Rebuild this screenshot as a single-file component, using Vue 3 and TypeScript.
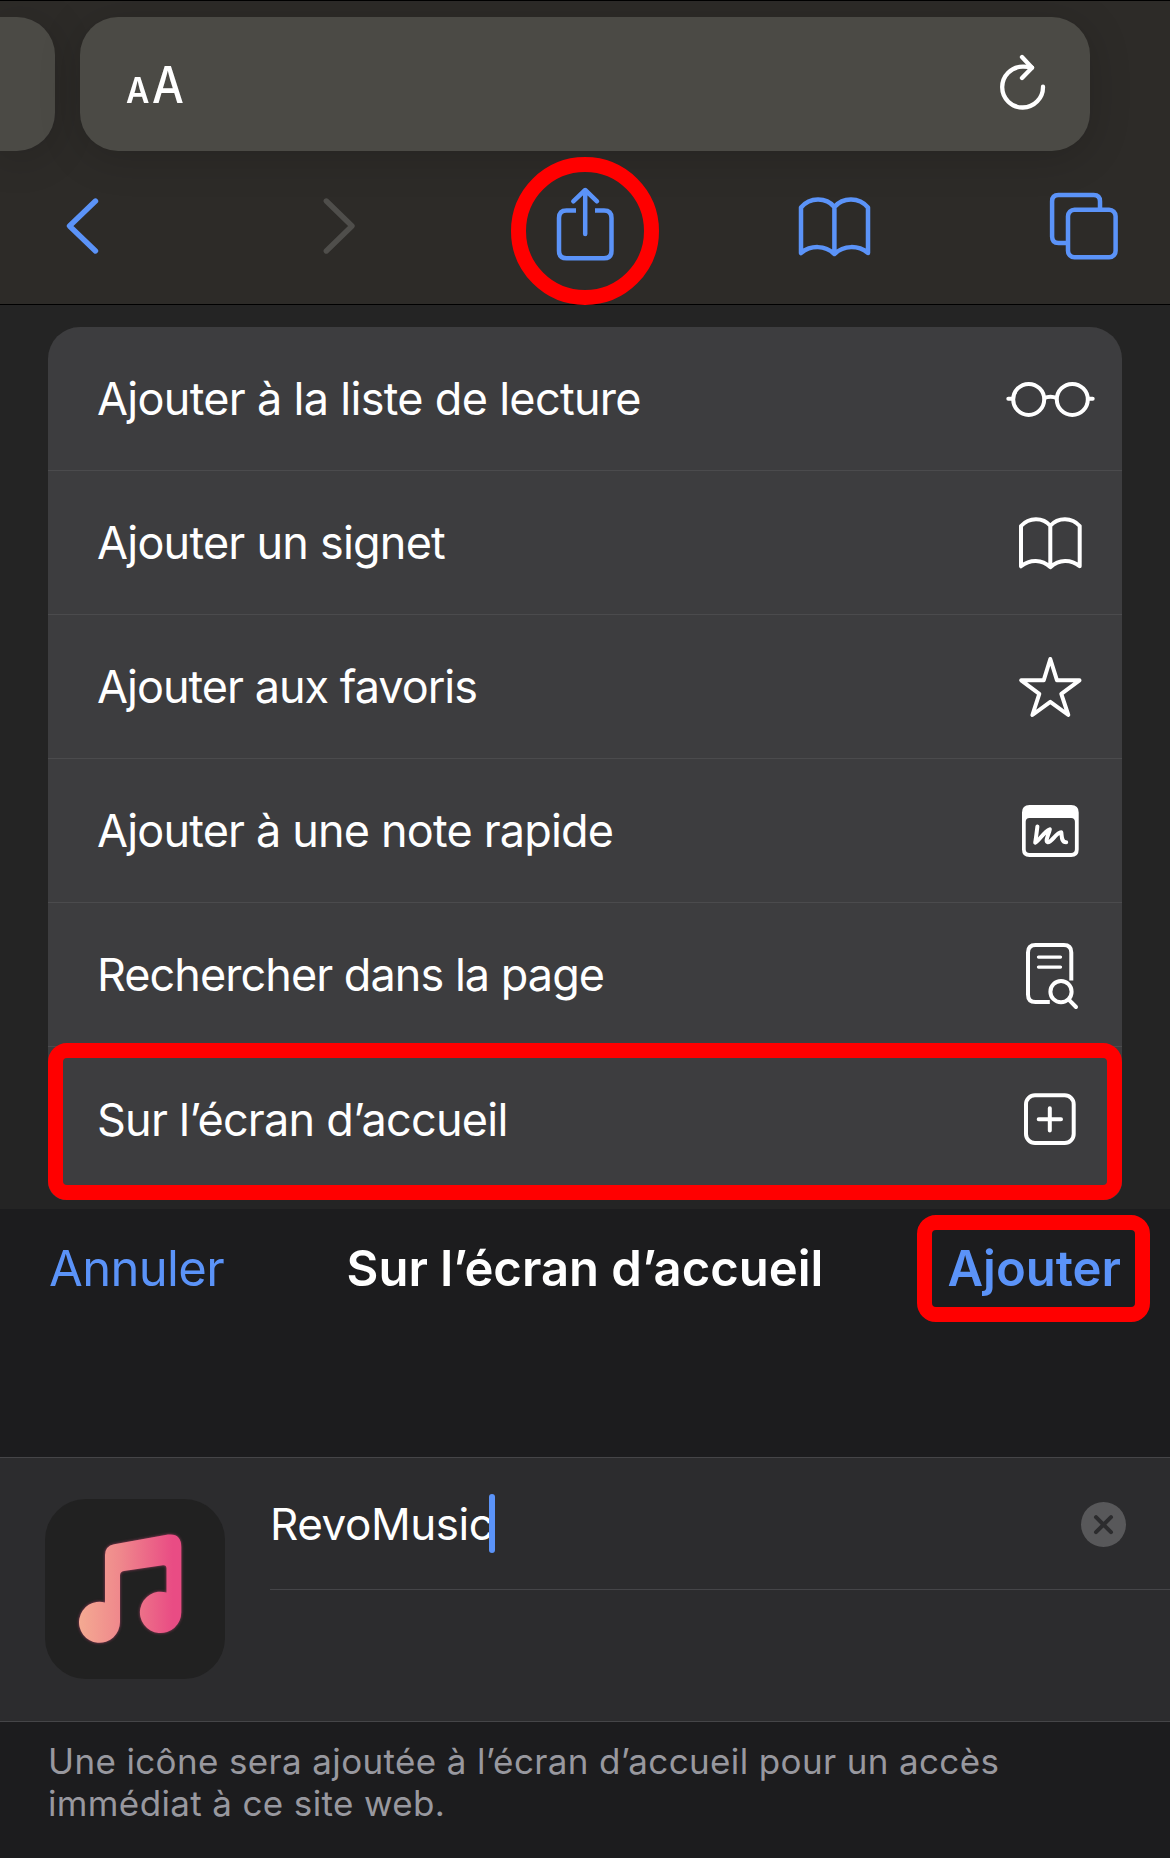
<script setup lang="ts">
import { ref } from 'vue'

type IconName = 'glasses' | 'book' | 'star' | 'note' | 'find' | 'plus'

interface Action {
  label: string
  icon: IconName
  tracking: number
}

const actions: Action[] = [
  { label: 'Ajouter à la liste de lecture', icon: 'glasses', tracking: -0.7 },
  { label: 'Ajouter un signet', icon: 'book', tracking: -0.78 },
  { label: 'Ajouter aux favoris', icon: 'star', tracking: -1 },
  { label: 'Ajouter à une note rapide', icon: 'note', tracking: -0.83 },
  { label: 'Rechercher dans la page', icon: 'find', tracking: -0.96 },
  { label: 'Sur l’écran d’accueil', icon: 'plus', tracking: -0.75 },
]

const siteName = ref<string>('RevoMusic')
</script>

<template>
  <main class="screen">
    <section class="browser">
      <div class="tabs">
        <div class="pill previous"></div>
        <div class="pill address">
          <div class="text-size"><span class="small-a">A</span><span class="big-a">A</span></div>
          <svg class="reload" width="50" height="60" viewBox="999 54 50 60">
            <path d="M1044 86.7A20.4 20.4 0 1 1 1023.6 66.7Q1029 66.6 1033 67.6" />
            <path d="M1023 57L1033 67.7L1023 78" />
          </svg>
        </div>
      </div>
      <nav class="toolbar">
        <svg class="back" width="40" height="60" viewBox="62 196 40 60"><path class="chevron" d="M95.5 201L69.5 226L95.5 251" /></svg>
        <svg class="forward" width="40" height="60" viewBox="319 196 40 60"><path class="chevron" d="M326.3 201L352 226L326.3 251" /></svg>
        <div class="share">
          <svg width="62" height="76" viewBox="554 186 62 76">
            <path d="M576 210.5H566.5Q559 210.5 559 218V250.8Q559 258.3 566.5 258.3H604Q611.5 258.3 611.5 250.8V218Q611.5 210.5 604 210.5H595" />
            <path class="round" d="M585.2 234V190.5M573.3 201.3L585.2 190L597 201.3" />
          </svg>
          <i class="ring"></i>
        </div>
        <svg class="bookmarks" width="76" height="66" viewBox="796 193 76 66">
          <path class="round" d="M801 253V207.5C810 197 826 197 834.4 207C843 197 859 197 868 207.5V253C858 245 844 245 834.4 254C825 245 811 245 801 253ZM834.4 207V254" />
        </svg>
        <svg width="72" height="72" viewBox="1048 190 72 72">
          <rect x="1068" y="209.7" width="47.6" height="47.6" rx="6.5" />
          <path d="M1100 208V201.5Q1100 195.1 1093.6 195.1H1058.5Q1052.1 195.1 1052.1 201.5V236.5Q1052.1 243 1058.5 243H1066" />
        </svg>
      </nav>
    </section>

    <section class="sheet">
      <ul class="actions">
        <li v-for="action in actions" :key="action.icon">
          <span :style="{ letterSpacing: action.tracking + 'px' }">{{ action.label }}</span>
          <svg v-if="action.icon === 'glasses'" width="96" height="60" viewBox="1002 369 96 60">
            <circle cx="1028.7" cy="399.4" r="15.5" />
            <circle cx="1072.3" cy="399.4" r="15.5" />
            <path d="M1044 398.2Q1050.4 395.4 1057 398.2" />
            <path class="round" d="M1008.3 398.8H1013M1088 398.8H1092.7" />
          </svg>
          <svg v-else-if="action.icon === 'book'" width="96" height="60" viewBox="1002 513 96 60">
            <path class="round" d="M1021 566.3V526C1029 517 1043 517 1050.3 525.8C1058 517 1072 517 1079.7 526V566.3C1071 559 1059 559 1050.3 567.2C1042 559 1030 559 1021 566.3ZM1050.3 526V567" />
          </svg>
          <svg v-else-if="action.icon === 'star'" width="96" height="68" viewBox="1002 653 96 68">
            <path class="round" d="M1050.3 659L1057 680.3H1079.5L1061.3 693.8L1068.3 715L1050.3 701.9L1032.4 715L1039.3 693.8L1021.2 680.3H1043.7Z" />
          </svg>
          <svg v-else-if="action.icon === 'note'" width="96" height="60" viewBox="1002 801 96 60">
            <path class="solid" fill-rule="evenodd" d="M1029.5 805H1071.2Q1078.7 805 1078.7 812.5V849.5Q1078.7 857 1071.2 857H1029.5Q1022 857 1022 849.5V812.5Q1022 805 1029.5 805ZM1029.5 818Q1025.7 818 1025.7 821.8V849.3Q1025.7 853.1 1029.5 853.1H1071.1Q1074.9 853.1 1074.9 849.3V821.8Q1074.9 818 1071.1 818Z" />
            <path class="round" d="M1037.4 826.5Q1036 838 1035.2 842.7C1039 841 1044 831.5 1049.8 829.3C1049 834 1044.5 841.5 1047.8 842.2C1052 842.5 1055.5 833 1061.3 832.3C1062 836 1061 842.3 1066.2 842.3" />
          </svg>
          <svg v-else-if="action.icon === 'find'" width="96" height="72" viewBox="1002 938 96 72">
            <path d="M1071.3 979.5V951.5Q1071.3 944 1063.8 944H1035.5Q1028 944 1028 951.5V993.5Q1028 1001 1035.5 1001H1049.8" />
            <path class="fine" d="M1038.5 956.1H1060.5M1038.5 966.1H1060.5" />
            <circle cx="1061" cy="990.7" r="10.6" />
            <path class="round" d="M1069 998.8L1076 1006" />
          </svg>
          <svg v-else width="96" height="60" viewBox="1002 1089 96 60">
            <rect x="1026" y="1095.3" width="47.7" height="47.7" rx="9" />
            <path class="round" d="M1038.7 1119.3H1061M1049.8 1108.2V1130.4" />
          </svg>
        </li>
      </ul>
      <i class="row-mark"></i>
    </section>

    <section class="dialog">
      <header class="dialog-head">
        <span class="cancel">Annuler</span>
        <strong class="title">Sur l’écran d’accueil</strong>
        <span class="add"><b>Ajouter</b><i class="add-mark"></i></span>
      </header>
      <div class="form">
        <div class="app-icon">
          <svg width="180" height="180" viewBox="45 1499 180 180">
            <defs>
              <linearGradient id="note-fill" gradientUnits="userSpaceOnUse" x1="79" y1="0" x2="181" y2="0">
                <stop offset="0" stop-color="#f4aa92" />
                <stop offset="0.4" stop-color="#ef888c" />
                <stop offset="0.92" stop-color="#e94c84" />
              </linearGradient>
            </defs>
            <path d="M105 1602.5V1555Q105 1546 114 1544.2L168 1534.6Q181.3 1533 181.3 1547V1612.3A20.7 20.7 0 1 1 166.5 1592.5V1568.5Q166.5 1564.8 163 1565.2L124 1571Q120 1571.8 120 1575.5V1622.3A20.5 20.5 0 1 1 105 1602.5Z" />
          </svg>
        </div>
        <div class="fields">
          <div class="field">
            <div class="value"><span>{{ siteName }}</span><i class="caret"></i></div>
            <svg class="clear" width="45" height="45" viewBox="0 0 45 45">
              <circle cx="22.5" cy="22.5" r="22.5" />
              <path d="M15 15.2L30 30.2M30 15.2L15 30.2" />
            </svg>
          </div>
        </div>
      </div>
      <p class="hint">Une icône sera ajoutée à l’écran d’accueil pour un accès<br />immédiat à ce site web.</p>
    </section>
  </main>
</template>

<style>
body {
  margin: 0;
  background: #1c1c1e;
}
</style>

<style scoped>
.screen {
  width: 1170px;
  height: 1858px;
  overflow: hidden;
  display: flex;
  flex-direction: column;
  font-family: Inter, "Liberation Sans", sans-serif;
  color: #fff;
  background: #1c1c1e;
}
svg {
  display: block;
  flex: none;
  fill: none;
  stroke: currentColor;
  stroke-width: 4;
}
.round,
.chevron,
.fine {
  stroke-linecap: round;
  stroke-linejoin: round;
}
.browser {
  box-sizing: border-box;
  height: 305px;
  flex: none;
  border-top: 1px solid #000;
  border-bottom: 1px solid #000;
  background: #2d2b28;
}
.tabs {
  display: flex;
  gap: 25px;
  padding-top: 16px;
}
.pill {
  height: 133.5px;
  background: #4b4a45;
  box-shadow: 0 6px 42px rgba(0, 0, 0, 0.17);
}
.previous {
  width: 55px;
  border-radius: 0 38px 38px 0;
}
.address {
  box-sizing: border-box;
  width: 1010px;
  border-radius: 38px;
  padding: 0 42px 0 46px;
  display: flex;
  justify-content: space-between;
  align-items: center;
}
.text-size {
  display: flex;
  align-items: baseline;
  padding-top: 8px;
  line-height: 60px;
}
.small-a {
  font-size: 35px;
  font-weight: 600;
  transform: scaleX(0.92);
  transform-origin: left;
}
.big-a {
  font-size: 50.5px;
  font-weight: 500;
  margin-left: 1px;
  transform: scaleX(0.89);
  transform-origin: left;
}
.reload {
  stroke-width: 4.3;
  stroke-linecap: round;
  stroke-linejoin: round;
}
.toolbar {
  display: flex;
  align-items: center;
  height: 76px;
  padding: 37.5px 50px 0 62px;
  color: #5b93f8;
}
.toolbar svg {
  stroke-width: 4.5;
}
.toolbar .chevron {
  stroke-width: 5.4;
}
.back {
  margin-right: 217px;
}
.forward {
  margin-right: 195px;
  color: #4f4e4b;
}
.share {
  position: relative;
  margin: 0 180px 4px 0;
}
.bookmarks {
  margin-right: 176px;
}
.ring {
  position: absolute;
  left: -43px;
  top: -29px;
  box-sizing: border-box;
  width: 148px;
  height: 148px;
  border: 15px solid #f00;
  border-radius: 50%;
  z-index: 2;
}
.sheet {
  position: relative;
  flex: none;
  height: 904px;
  box-sizing: border-box;
  padding: 22px 48px 0;
  background: #242424;
}
.actions {
  margin: 0;
  padding: 0;
  list-style: none;
  height: 873px;
  border-radius: 32px 32px 18px 18px;
  overflow: hidden;
  background: #3d3d3f;
}
.actions li {
  box-sizing: border-box;
  height: 144px;
  display: flex;
  align-items: center;
  justify-content: space-between;
  padding: 0 24px 0 49px;
  border-bottom: 1px solid #4b4b4d;
  font-size: 45px;
  white-space: nowrap;
}
.actions li:last-child {
  border-bottom: 0;
}
.solid {
  fill: currentColor;
  stroke: none;
}
.fine {
  stroke-width: 3.3;
}
.row-mark {
  position: absolute;
  left: 48px;
  right: 48px;
  top: 738px;
  height: 157px;
  box-sizing: border-box;
  border: 15px solid #f00;
  border-radius: 19px;
}
.dialog {
  flex: 1;
  background: #1c1c1e;
}
.dialog-head {
  height: 248px;
  box-sizing: border-box;
  padding: 30px 49px 0;
  display: grid;
  grid-template-columns: 1fr auto 1fr;
  align-items: start;
  font-size: 49px;
  line-height: 60px;
  white-space: nowrap;
}
.cancel,
.add {
  color: #5b93f8;
}
.cancel {
  letter-spacing: -0.65px;
}
.add {
  position: relative;
  justify-self: end;
}
.title,
.add b {
  font-weight: 600;
}
.add-mark {
  position: absolute;
  right: -29px;
  top: -24px;
  box-sizing: border-box;
  width: 233px;
  height: 107px;
  border: 15px solid #f00;
  border-radius: 19px;
}
.form {
  box-sizing: border-box;
  height: 265px;
  display: flex;
  border-top: 1px solid #454548;
  border-bottom: 1px solid #454548;
  background: #2c2c2e;
  padding: 0 0 0 45px;
  gap: 45px;
}
.app-icon {
  width: 180px;
  height: 180px;
  margin-top: 41px;
  border-radius: 41px;
  background: #212121;
}
.app-icon path {
  fill: url(#note-fill);
  stroke: none;
  filter: drop-shadow(0 0 1.5px rgba(233, 76, 132, 0.6));
}
.fields {
  flex: 1;
}
.field {
  box-sizing: border-box;
  height: 132px;
  display: flex;
  justify-content: space-between;
  padding: 36px 44px 0 0;
  border-bottom: 1px solid #454548;
}
.value {
  display: flex;
  height: 59px;
  line-height: 59px;
  font-size: 44px;
}
.value span {
  margin-top: 1px;
  letter-spacing: -0.45px;
}
.caret {
  width: 6px;
  height: 59px;
  margin-left: -4px;
  border-radius: 3px;
  background: #5b93f8;
}
.clear {
  margin-top: 8px;
}
.clear circle {
  fill: #58585a;
  stroke: none;
}
.clear path {
  stroke: #2c2c2e;
  stroke-width: 4;
  stroke-linecap: round;
}
.hint {
  margin: 0;
  padding: 18px 48px 0;
  font-size: 35px;
  line-height: 42px;
  letter-spacing: 0.36px;
  color: #98989f;
  white-space: nowrap;
}
</style>
